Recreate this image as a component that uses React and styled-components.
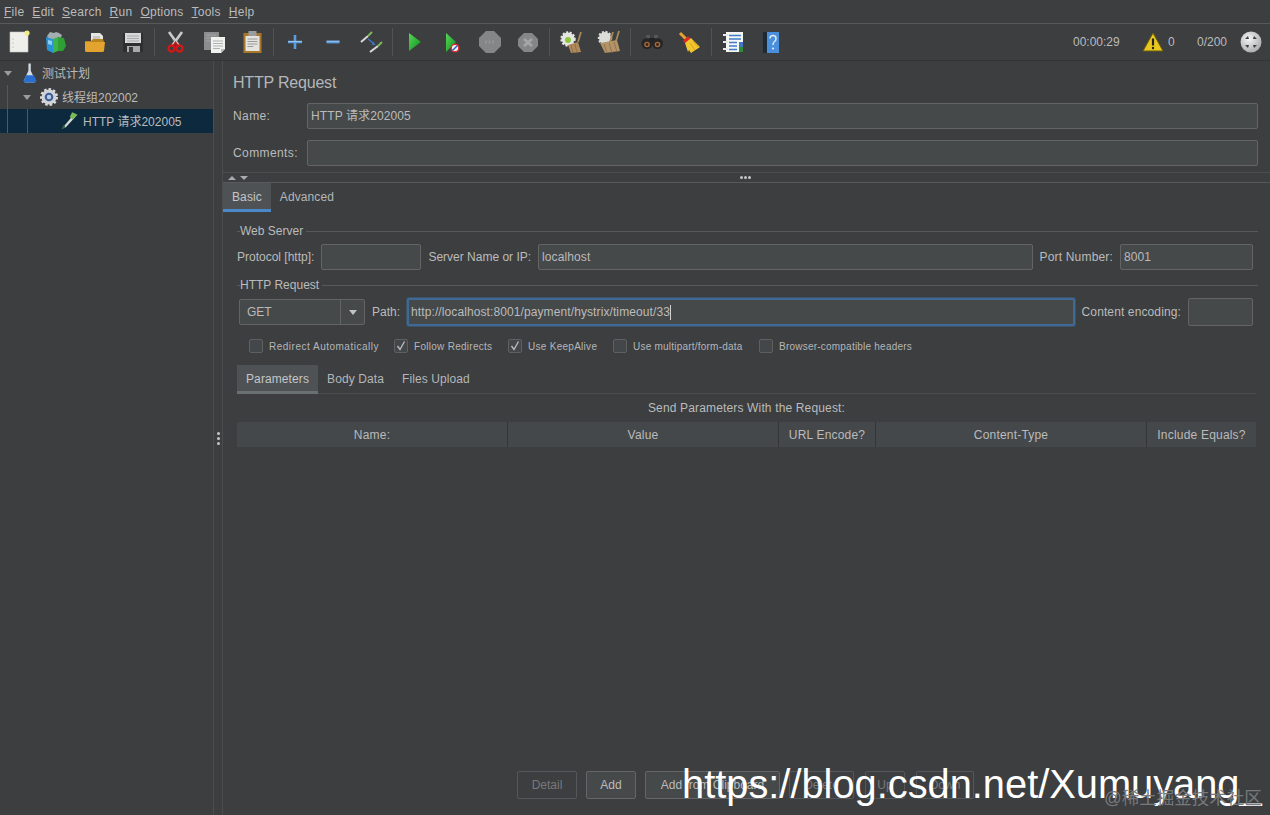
import { Fragment } from "react";
import styled, { createGlobalStyle } from "styled-components";

const GlobalStyle = createGlobalStyle`
  html, body {
    margin: 0;
    padding: 0;
    background: #3c3e40;
    overflow: hidden;
  }
  * { box-sizing: border-box; }
`;

const Page = styled.div`
  position: relative;
  width: 1270px;
  height: 815px;
  display: flex;
  flex-direction: column;
  overflow: hidden;
  background: #3c3e40;
  color: #bbbbbb;
  font-family: "Liberation Sans", "Noto Sans CJK SC", sans-serif;
  font-size: 12px;
`;

const MenuBar = styled.div`
  height: 24px;
  display: flex;
  align-items: center;
  padding-left: 4px;
  gap: 8px;
  letter-spacing: 0.25px;
  border-bottom: 1px solid #57595b;
`;

const MenuItem = styled.span`
  line-height: 14px;
`;

const Mnemonic = styled.span`
  text-decoration: underline;
`;

const Toolbar = styled.div`
  height: 37px;
  display: flex;
  align-items: center;
  border-bottom: 1px solid #323436;
`;

const ToolButton = styled.div`
  width: 38px;
  height: 36px;
  display: flex;
  align-items: center;
  justify-content: center;
`;

const ToolSep = styled.div`
  width: 1px;
  height: 28px;
  margin: 0 2px;
  background: #515355;
`;

const Status = styled.div`
  margin-left: auto;
  display: flex;
  align-items: center;
  height: 36px;
`;

const StatusText = styled.span`
  margin-left: ${(p) => p.$left || 0}px;
  width: ${(p) => p.$width}px;
`;

const Body = styled.div`
  flex: 1;
  display: flex;
  min-height: 0;
`;

const TreePanel = styled.div`
  width: 213px;
`;

const TreeRow = styled.div`
  position: relative;
  height: 24px;
  display: flex;
  align-items: center;
  padding-left: ${(p) => p.$indent}px;
  background: ${(p) => (p.$selected ? "#0d293e" : "transparent")};
  color: #bbbbbb;
`;

const TreeLine = styled.div`
  position: absolute;
  top: 0;
  bottom: 0;
  left: ${(p) => p.$left}px;
  width: 1px;
  background: #555759;
`;

const TreeArrow = styled.span`
  width: 0;
  height: 0;
  margin-right: 7px;
  border-left: 4.5px solid transparent;
  border-right: 4.5px solid transparent;
  border-top: 5px solid #9a9c9e;
`;

const TreeLabel = styled.span`
  margin-left: ${(p) => p.$left}px;
  margin-top: ${(p) => p.$top}px;
  line-height: 14px;
  white-space: nowrap;
`;

const VSplit = styled.div`
  width: 10px;
  display: flex;
  flex-direction: column;
  align-items: center;
  justify-content: center;
  gap: 2px;
  border-left: 1px solid #4b4d4f;
  border-right: 1px solid #4b4d4f;
`;

const Dot = styled.i`
  width: 3px;
  height: 3px;
  border-radius: 50%;
  background: #c4c6c8;
`;

const Main = styled.div`
  flex: 1;
  display: flex;
  flex-direction: column;
  min-width: 0;
`;

const Head = styled.div`
  padding: 11px 12px 0 10px;
`;

const Title = styled.div`
  font-size: 16px;
  letter-spacing: -0.2px;
  line-height: 22px;
  color: #b4b6b8;
`;

const HeadRow = styled.div`
  display: flex;
  align-items: center;
  margin-top: ${(p) => p.$top}px;
`;

const HeadLabel = styled.span`
  width: 74px;
  letter-spacing: 0.4px;
`;

const Field = styled.div`
  height: ${(p) => p.$height || 26}px;
  width: ${(p) => (p.$width ? `${p.$width}px` : "auto")};
  flex: ${(p) => (p.$width ? "none" : 1)};
  display: flex;
  align-items: center;
  padding: 0 ${(p) => (p.$focus ? 2 : 3)}px;
  background: #45494a;
  border: ${(p) => (p.$focus ? "2px solid #3d6a96" : "1px solid #646464")};
  border-radius: 2px;
  box-shadow: ${(p) => (p.$focus ? "0 0 0 1px rgba(61, 106, 150, 0.45)" : "none")};
  color: #bbbbbb;
  line-height: 14px;
  letter-spacing: 0.1px;
  white-space: nowrap;
  &::after {
    content: "";
    display: ${(p) => (p.$focus ? "block" : "none")};
    width: 1px;
    height: 15px;
    background: #d0d0d0;
  }
`;

const HSplit = styled.div`
  height: 11px;
  margin-top: 6px;
  display: flex;
  align-items: center;
  position: relative;
  border-top: 1px solid #4b4d4f;
  border-bottom: 1px solid #57595b;
  padding-left: 5px;
  gap: 4px;
`;

const SplitUp = styled.i`
  border-left: 4px solid transparent;
  border-right: 4px solid transparent;
  border-bottom: 4px solid #a9abad;
`;

const SplitDown = styled.i`
  border-left: 4px solid transparent;
  border-right: 4px solid transparent;
  border-top: 4px solid #a9abad;
`;

const SplitDots = styled.div`
  position: absolute;
  left: 517px;
  top: 3px;
  display: flex;
  gap: 1px;
`;

const TabBar = styled.div`
  display: flex;
  height: ${(p) => p.$height}px;
  margin: ${(p) => p.$margin || "0"};
  letter-spacing: 0.1px;
  box-shadow: ${(p) => (p.$line ? "inset 0 -1px 0 #4b4d4f" : "none")};
`;

const Tab = styled.div`
  height: 100%;
  display: flex;
  align-items: center;
  padding: 1px 9px 0;
  background: ${(p) => (p.$active ? "#4e5254" : "transparent")};
  border-bottom: ${(p) => (p.$active ? `3px solid ${p.$accent}` : "3px solid transparent")};
  color: ${(p) => (p.$active ? "#c4c6c8" : "#b4b6b8")};
`;

const Content = styled.div`
  flex: 1;
  display: flex;
  flex-direction: column;
  padding: 0 14px 16px 14px;
  min-height: 0;
`;

const GroupTitle = styled.div`
  display: flex;
  align-items: center;
  height: 14px;
  margin-top: ${(p) => p.$top}px;
  color: #bbbbbb;
  &::before {
    content: "";
    width: 3px;
    height: 1px;
    background: #58595b;
  }
  &::after {
    content: "";
    flex: 1;
    height: 1px;
    margin-left: 3px;
    margin-right: -2px;
    background: #58595b;
  }
`;

const FormRow = styled.div`
  display: flex;
  align-items: center;
  margin-top: 6px;
  padding-left: ${(p) => p.$left || 0}px;
  padding-right: 3px;
`;

const FieldLabel = styled.span`
  margin: 0 ${(p) => p.$right}px 0 ${(p) => p.$left}px;
  letter-spacing: ${(p) => p.$track || 0}px;
  white-space: nowrap;
`;

const Combo = styled.div`
  width: 126px;
  height: 26px;
  display: flex;
  background: #45494a;
  border: 1px solid #646464;
  border-radius: 2px;
`;

const ComboText = styled.span`
  flex: 1;
  display: flex;
  align-items: center;
  padding-left: 7px;
  border-right: 1px solid #646464;
`;

const ComboArrow = styled.span`
  width: 23px;
  display: flex;
  align-items: center;
  justify-content: center;
  &::after {
    content: "";
    border-left: 4px solid transparent;
    border-right: 4px solid transparent;
    border-top: 5px solid #c0c2c4;
  }
`;

const CheckRow = styled.div`
  display: flex;
  align-items: center;
  height: 16px;
  margin-top: 12px;
  padding-left: 12px;
`;

const CheckItem = styled.div`
  display: flex;
  align-items: center;
  width: ${(p) => p.$width}px;
  font-size: 10px;
  letter-spacing: ${(p) => p.$track}px;
  white-space: nowrap;
  color: #b4b6b8;
`;

const Box = styled.span`
  width: 14px;
  height: 14px;
  margin-right: 6px;
  display: flex;
  align-items: center;
  justify-content: center;
  background: #43474a;
  border: 1px solid #5e6060;
  border-radius: 2px;
`;

const Caption = styled.div`
  height: 14px;
  margin-top: 7px;
  line-height: 14px;
  letter-spacing: 0.15px;
  text-align: center;
`;

const TableHead = styled.div`
  display: flex;
  height: 25px;
  margin-top: 7px;
  letter-spacing: 0.2px;
  background: #45484a;
`;

const HeadCell = styled.div`
  width: ${(p) => p.$width}px;
  display: flex;
  align-items: center;
  justify-content: center;
  border-right: ${(p) => (p.$last ? "none" : "1px solid #333537")};
`;

const Spacer = styled.div`
  flex: 1;
`;

const ButtonRow = styled.div`
  display: flex;
  height: 28px;
  padding-left: 280px;
`;

const Button = styled.div`
  width: ${(p) => p.$width}px;
  margin-right: ${(p) => p.$right}px;
  display: flex;
  align-items: center;
  justify-content: center;
  white-space: nowrap;
  background: ${(p) => (p.$disabled ? "transparent" : "#45494a")};
  border: 1px solid ${(p) => (p.$disabled ? "#55585a" : "#646668")};
  border-radius: 2px;
  color: ${(p) => (p.$disabled ? "#77797b" : "#bbbbbb")};
`;

const Watermark = styled.div`
  position: absolute;
  left: 682px;
  top: 760px;
  font-size: 39.8px;
  line-height: 48px;
  color: #ffffff;
  white-space: nowrap;
`;

const Stamp = styled.div`
  position: absolute;
  left: 1104px;
  top: 787px;
  font-size: 17.5px;
  line-height: 22px;
  color: #77797b;
  white-space: nowrap;
`;

const Svg = ({ size = 28, children }) => (
  <svg width={size} height={size} viewBox="0 0 28 28">
    {children}
  </svg>
);

const NewIcon = () => (
  <Svg>
    <path d="M5 4h16l2 2v18H5z" fill="#eeeeea" stroke="#c8c8c4" strokeWidth=".6" />
    <circle cx="22" cy="5" r="2.6" fill="#f3eb8a" />
    <circle cx="8" cy="11" r=".6" fill="#999" />
    <circle cx="8" cy="15" r=".6" fill="#999" />
    <circle cx="8" cy="19" r=".6" fill="#999" />
  </Svg>
);

const TemplateIcon = () => (
  <Svg>
    <g transform="translate(-2 0)">
      <path d="M6 8l3-4 4 1 2-1 3 1 3 2-3 7H9z" fill="#a4adb0" />
      <path d="M5 9l7 2v14l-6-3z" fill="#2a93d8" />
      <path d="M12 11l5-2v14l-5 2z" fill="#3fb24a" />
      <path d="M17 9l6 1 2 8-3 5h-5z" fill="#2fa035" />
      <path d="M7 12l4 1v4l-4-1z" fill="#8fd0f0" />
    </g>
  </Svg>
);

const OpenIcon = () => (
  <Svg>
    <path d="M10 5h9l3 3v8H10z" fill="#e6e6e2" />
    <path d="M12 9h7M12 11h7M12 13h7" stroke="#999" strokeWidth=".8" />
    <path d="M4 13h6l2-2h10l1 3H4z" fill="#b98420" />
    <path d="M4 14h20l-1 9q0 1-2 1H6q-2 0-2-1z" fill="#e2a42f" />
  </Svg>
);

const SaveIcon = () => (
  <Svg>
    <path d="M4 5h20v19H4z" fill="#2e2f31" />
    <path d="M6 5h16v10H6z" fill="#d6d8da" />
    <path d="M8 8h12M8 10.5h12M8 13h12" stroke="#9c9ea0" strokeWidth=".8" />
    <path d="M8 18h13v6H8z" fill="#a8aaac" />
    <path d="M10 19h4v5h-4z" fill="#3a3b3d" />
  </Svg>
);

const CutIcon = () => (
  <Svg>
    <path d="M7 4l10 14M20 4L10 18" stroke="#c8cacc" strokeWidth="2.6" fill="none" />
    <circle cx="9.5" cy="20.5" r="3" fill="none" stroke="#d01818" strokeWidth="2.4" />
    <circle cx="17.5" cy="20.5" r="3" fill="none" stroke="#d01818" strokeWidth="2.4" />
    <path d="M11 18l2.5-3.5L16 18" fill="none" stroke="#c01818" strokeWidth="1.6" />
  </Svg>
);

const CopyIcon = () => (
  <Svg>
    <g transform="translate(1 0)">
      <path d="M3 4h15v18H3z" fill="#8b8d8f" />
      <path d="M5 7h10M5 10h10M5 13h10" stroke="#a8aaac" strokeWidth=".8" />
      <path d="M10 9h14v12l-4 4H10z" fill="#f1f1ee" />
      <path d="M12 13h10M12 15.5h10M12 18h10M12 20.5h7" stroke="#a0a2a4" strokeWidth=".8" />
      <path d="M20 25v-4h4z" fill="#b8babc" />
    </g>
  </Svg>
);

const PasteIcon = () => (
  <Svg>
    <path d="M5.5 5h18v20h-18z" fill="#a8772c" />
    <path d="M7.5 8h14v15h-14z" fill="#e6e4de" />
    <path d="M10.5 3h8v5h-8z" fill="#9a9c9e" />
    <path d="M9.5 11h10M9.5 13.5h10M9.5 16h10M9.5 18.5h6" stroke="#8f9193" strokeWidth=".9" />
  </Svg>
);

const PlusIcon = () => (
  <Svg>
    <path d="M7 14h14M14 7v14" stroke="#5b9ee0" strokeWidth="2.6" />
    <path d="M7 13.5h14" stroke="#a9cdf0" strokeWidth=".8" />
  </Svg>
);

const MinusIcon = () => (
  <Svg>
    <path d="M7.5 14h13" stroke="#5b9ee0" strokeWidth="2.8" />
    <path d="M7.5 13.3h13" stroke="#a9cdf0" strokeWidth=".8" />
  </Svg>
);

const ToggleIcon = () => (
  <Svg>
    <path d="M4 14l7-6" stroke="#d8dadc" strokeWidth="2" />
    <path d="M11 8l4-4" stroke="#7fb85a" strokeWidth="2" />
    <path d="M13 24l8-6" stroke="#d8dadc" strokeWidth="2" />
    <path d="M21 18l4-4" stroke="#7fb85a" strokeWidth="2" />
    <path d="M11 11l5 4" stroke="#3f78c8" strokeWidth="1.5" />
    <path d="M18.5 17l-4-.3 2-2.9z" fill="#3f78c8" />
  </Svg>
);

const PlayIcon = () => (
  <Svg>
    <defs>
      <linearGradient id="play" x1="0" y1="0" x2="1" y2="1">
        <stop offset="0" stopColor="#58d858" />
        <stop offset="1" stopColor="#0b8f1c" />
      </linearGradient>
    </defs>
    <path d="M9 5l12 9-12 9z" fill="url(#play)" />
  </Svg>
);

const PlayNoPauseIcon = () => (
  <Svg>
    <path d="M8 5l10 9-10 10z" fill="url(#play)" />
    <circle cx="17" cy="20" r="3.8" fill="#f2f2f2" stroke="#d83030" strokeWidth="1.4" />
    <path d="M14.5 22.5l5-5" stroke="#3060c0" strokeWidth="1.4" />
  </Svg>
);

const StopIcon = () => (
  <Svg>
    <path d="M10 3h8l7 7v8l-7 7h-8l-7-7v-8z" fill="#858688" />
    <path d="M9 14h10" stroke="#929496" strokeWidth="3" strokeDasharray="2 1.5" />
  </Svg>
);

const ShutdownIcon = () => (
  <Svg>
    <path d="M10 5h8l6 6v7l-6 6h-8l-6-6v-7z" fill="#858688" />
    <path d="M10 11l8 7M18 11l-8 7" stroke="#a4a6a8" strokeWidth="2.6" />
  </Svg>
);

const Gear = ({ cx, cy, r, fill }) => (
  <g>
    <circle cx={cx} cy={cy} r={r} fill="none" stroke={fill} strokeWidth="2.4" strokeDasharray="2 1.5" />
    <circle cx={cx} cy={cy} r={r} fill={fill} />
  </g>
);

const ClearIcon = () => (
  <Svg>
    <Gear cx={11} cy={11} r={6.5} fill="#e4e4e0" />
    <circle cx="11" cy="12" r="3" fill="#8cc63e" />
    <path d="M11 17l10-3 3 10-10 1z" fill="#b08a5c" />
    <path d="M21 14l3-10" stroke="#a88858" strokeWidth="1.8" />
    <path d="M14 17l2 8M18 16l2 9" stroke="#8a6a40" strokeWidth=".8" />
  </Svg>
);

const ClearAllIcon = () => (
  <Svg>
    <Gear cx={10} cy={10} r={6} fill="#dcdcd8" />
    <path d="M5 15l17-3 3 11-15 2z" fill="#b39468" />
    <path d="M15 14l3-10M21 13l3-10" stroke="#a88858" strokeWidth="1.8" />
    <path d="M9 16l3 9M14 15l3 10M19 14l3 10" stroke="#8a6a40" strokeWidth=".8" />
  </Svg>
);

const BinocularsIcon = () => (
  <Svg>
    <path d="M8 7h4v5H8zM16 7h4v5h-4z" fill="#54565a" />
    <path d="M11 10h6v6h-6z" fill="#222" />
    <circle cx="9" cy="15.5" r="5.5" fill="#262626" />
    <circle cx="19.5" cy="15.5" r="5.5" fill="#262626" />
    <circle cx="9" cy="16.5" r="2.8" fill="#a86a3a" />
    <circle cx="19.5" cy="16.5" r="2.8" fill="#a86a3a" />
    <circle cx="9" cy="16.5" r="1.4" fill="#3a2416" />
    <circle cx="19.5" cy="16.5" r="1.4" fill="#3a2416" />
  </Svg>
);

const BroomIcon = () => (
  <Svg>
    <path d="M4 5l6 6" stroke="#e8a030" strokeWidth="3" />
    <path d="M7 13l5-5 3 3-5 5z" fill="#d82828" />
    <path d="M9 15l6-5 9 9-9 6-2-3-1 2z" fill="#f2c62e" />
    <path d="M14 15l5 7M17 13l5 6" stroke="#d09a18" strokeWidth=".8" />
  </Svg>
);

const LogIcon = () => (
  <Svg>
    <path d="M7 4h17v20H7z" fill="#f6f6f4" />
    <path d="M10 7.5h12M10 11h12M10 14.5h8M10 18h8M10 21.5h8" stroke="#3f7ec8" strokeWidth="1.3" />
    <path d="M4 7h5M4 14h5M4 21h5" stroke="#e8e8e8" strokeWidth="2" />
    <path d="M20 14h4v5h-4z" fill="#3f78c8" />
    <path d="M20 19h4v5h-4z" fill="#2f8a3a" />
  </Svg>
);

const HelpIcon = () => (
  <Svg>
    <path d="M6 4h5v21H6z" fill="#1c2a36" />
    <path d="M10 4h12v21H10z" fill="#4a8fdc" />
    <path
      d="M13 10.5q0-3 3-3t3 3q0 2-1.5 3t-1.5 3.5"
      fill="none"
      stroke="#dfeaf6"
      strokeWidth="1.5"
    />
    <circle cx="16" cy="20.5" r="1.1" fill="#dfeaf6" />
  </Svg>
);

const WarningIcon = () => (
  <svg width="22" height="20" viewBox="0 0 22 20">
    <path d="M11 1l10 18H1z" fill="#e8c81c" stroke="#6c5c10" strokeWidth="1" />
    <path d="M11 6.5v7" stroke="#222" strokeWidth="2.2" />
    <circle cx="11" cy="16" r="1.2" fill="#222" />
  </svg>
);

const GlobeIcon = () => (
  <svg width="22" height="22" viewBox="0 0 22 22">
    <defs>
      <radialGradient id="globe" cx=".4" cy=".35" r=".7">
        <stop offset="0" stopColor="#f4f4f4" />
        <stop offset="1" stopColor="#a8aaac" />
      </radialGradient>
    </defs>
    <circle cx="11" cy="11" r="10.5" fill="url(#globe)" />
    <path d="M5 8l3-3 1 3zM17 8l-3-3-1 3zM5 14l3 3 1-3zM17 14l-3 3-1-3z" fill="#3c3f41" />
  </svg>
);

const FlaskIcon = () => (
  <Svg size={22}>
    <path d="M12 2h3v9l6 13q0 2-2 2H8q-2 0-2-2l6-13z" fill="#d4dce2" />
    <path d="M9 17h10l3 7q0 2-2 2H8q-2 0-2-2z" fill="#2a6fd0" />
  </Svg>
);

const GearIcon = () => (
  <Svg size={22}>
    <circle cx="14" cy="14" r="9.5" fill="#d8dadc" stroke="#d8dadc" strokeWidth="4" strokeDasharray="3 2.5" />
    <circle cx="14" cy="14" r="9" fill="#d0d2d6" />
    <circle cx="14" cy="14" r="5.5" fill="#3d5f96" />
    <circle cx="14" cy="14" r="2.8" fill="#b8cce8" />
  </Svg>
);

const PencilIcon = () => (
  <Svg size={22}>
    <path d="M19 7l-11 13-3 4 5-2 12-13z" fill="#d4d6d4" />
    <path d="M18 3l-3 6 4 3 6-6z" fill="#7dbb5a" />
    <path d="M5 24l2-5 3 3z" fill="#2f6a3a" />
  </Svg>
);

const Check = () => (
  <svg width="12" height="12" viewBox="0 0 12 12">
    <path d="M2.5 6L5 9.5l4.5-8" fill="none" stroke="#b8babc" strokeWidth="1.4" />
  </svg>
);

const toolGroups = [
  [NewIcon, TemplateIcon, OpenIcon, SaveIcon],
  [CutIcon, CopyIcon, PasteIcon],
  [PlusIcon, MinusIcon, ToggleIcon],
  [PlayIcon, PlayNoPauseIcon, StopIcon, ShutdownIcon],
  [ClearIcon, ClearAllIcon],
  [BinocularsIcon, BroomIcon],
  [LogIcon, HelpIcon],
];

const menus = ["File", "Edit", "Search", "Run", "Options", "Tools", "Help"];

const checks = [
  { label: "Redirect Automatically", on: false, width: 145, track: 0.5 },
  { label: "Follow Redirects", on: true, width: 114, track: 0.28 },
  { label: "Use KeepAlive", on: true, width: 105, track: 0.28 },
  { label: "Use multipart/form-data", on: false, width: 146, track: 0.22 },
  { label: "Browser-compatible headers", on: false, width: 170, track: 0.22 },
];

const columns = [
  { label: "Name:", width: 271 },
  { label: "Value", width: 271 },
  { label: "URL Encode?", width: 97 },
  { label: "Content-Type", width: 271 },
  { label: "Include Equals?", width: 109, last: true },
];

const buttons = [
  { label: "Detail", width: 60, right: 9, disabled: true },
  { label: "Add", width: 50, right: 9 },
  { label: "Add from Clipboard", width: 135, right: 9 },
  { label: "Delete", width: 65, right: 11, disabled: true },
  { label: "Up", width: 40, right: 11, disabled: true },
  { label: "Down", width: 58, right: 0, disabled: true },
];

export default function App() {
  return (
    <Page>
      <GlobalStyle />
      <MenuBar>
        {menus.map((m) => (
          <MenuItem key={m}>
            <Mnemonic>{m[0]}</Mnemonic>
            {m.slice(1)}
          </MenuItem>
        ))}
      </MenuBar>
      <Toolbar>
        {toolGroups.map((group, i) => (
          <Fragment key={i}>
            {i > 0 && <ToolSep />}
            {group.map((Icon, j) => (
              <ToolButton key={j}>
                <Icon />
              </ToolButton>
            ))}
          </Fragment>
        ))}
        <Status>
          <StatusText $width={69}>00:00:29</StatusText>
          <WarningIcon />
          <StatusText $left={4} $width={29}>0</StatusText>
          <StatusText $width={43}>0/200</StatusText>
          <GlobeIcon />
          <StatusText $width={8} />
        </Status>
      </Toolbar>
      <Body>
        <TreePanel>
          <TreeRow $indent={4}>
            <TreeArrow />
            <FlaskIcon />
            <TreeLabel $left={1} $top={2}>测试计划</TreeLabel>
          </TreeRow>
          <TreeRow $indent={23}>
            <TreeLine $left={7} />
            <TreeArrow />
            <GearIcon />
            <TreeLabel $left={2} $top={2}>线程组202002</TreeLabel>
          </TreeRow>
          <TreeRow $indent={58} $selected>
            <TreeLine $left={7} />
            <TreeLine $left={27} />
            <PencilIcon />
            <TreeLabel $left={3} $top={1}>HTTP 请求202005</TreeLabel>
          </TreeRow>
        </TreePanel>
        <VSplit>
          <Dot />
          <Dot />
          <Dot />
        </VSplit>
        <Main>
          <Head>
            <Title>HTTP Request</Title>
            <HeadRow $top={9}>
              <HeadLabel>Name:</HeadLabel>
              <Field>HTTP 请求202005</Field>
            </HeadRow>
            <HeadRow $top={11}>
              <HeadLabel>Comments:</HeadLabel>
              <Field />
            </HeadRow>
          </Head>
          <HSplit>
            <SplitUp />
            <SplitDown />
            <SplitDots>
              <Dot />
              <Dot />
              <Dot />
            </SplitDots>
          </HSplit>
          <TabBar $height={29}>
            <Tab $active $accent="#4a88c7">Basic</Tab>
            <Tab>Advanced</Tab>
          </TabBar>
          <Content>
            <GroupTitle $top={12}>Web Server</GroupTitle>
            <FormRow>
              <FieldLabel $left={0} $right={7}>Protocol [http]:</FieldLabel>
              <Field $width={100} />
              <FieldLabel $left={7} $right={7}>Server Name or IP:</FieldLabel>
              <Field>localhost</Field>
              <FieldLabel $left={7} $right={7} $track={0.17}>Port Number:</FieldLabel>
              <Field $width={133}>8001</Field>
            </FormRow>
            <GroupTitle $top={8}>HTTP Request</GroupTitle>
            <FormRow $left={2}>
              <Combo>
                <ComboText>GET</ComboText>
                <ComboArrow />
              </Combo>
              <FieldLabel $left={7} $right={7}>Path:</FieldLabel>
              <Field $focus $height={28}>http://localhost:8001/payment/hystrix/timeout/33</Field>
              <FieldLabel $left={7} $right={7} $track={0.12}>Content encoding:</FieldLabel>
              <Field $width={65} $height={28} />
            </FormRow>
            <CheckRow>
              {checks.map((c) => (
                <CheckItem key={c.label} $width={c.width} $track={c.track}>
                  <Box>{c.on && <Check />}</Box>
                  {c.label}
                </CheckItem>
              ))}
            </CheckRow>
            <TabBar $height={29} $margin="11px 0 0 0" $line>
              <Tab $active $accent="#687072">Parameters</Tab>
              <Tab>Body Data</Tab>
              <Tab>Files Upload</Tab>
            </TabBar>
            <Caption>Send Parameters With the Request:</Caption>
            <TableHead>
              {columns.map((c) => (
                <HeadCell key={c.label} $width={c.width} $last={c.last}>
                  {c.label}
                </HeadCell>
              ))}
            </TableHead>
            <Spacer />
            <ButtonRow>
              {buttons.map((b) => (
                <Button key={b.label} $width={b.width} $right={b.right} $disabled={b.disabled}>
                  {b.label}
                </Button>
              ))}
            </ButtonRow>
          </Content>
        </Main>
      </Body>
      <Watermark>https://blog.csdn.net/Xumuyang_</Watermark>
      <Stamp>@稀土掘金技术社区</Stamp>
    </Page>
  );
}
